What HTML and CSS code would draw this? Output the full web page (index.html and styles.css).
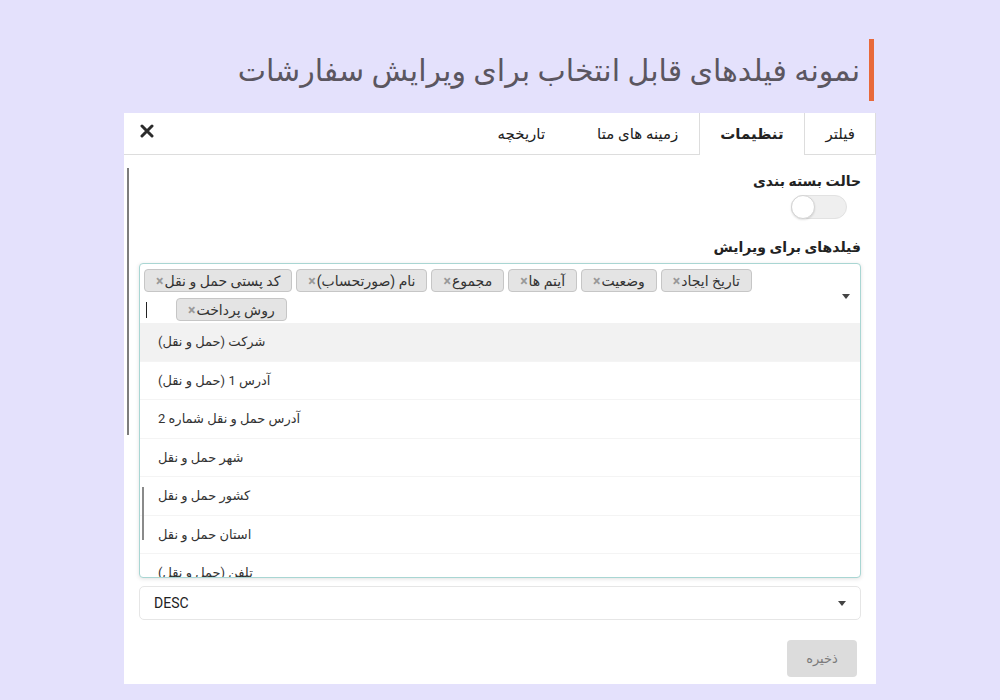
FILE: index.html
```html
<!DOCTYPE html>
<html lang="fa" dir="rtl">
<head>
  <meta charset="UTF-8" />
  <meta name="viewport" content="width=device-width, initial-scale=1.0" />
  <title>فیلدهای قابل ویرایش</title>
  <link rel="stylesheet" href="styles.css">
</head>
<body>
  <div class="page">
    <h1 class="page-title">نمونه فیلدهای قابل انتخاب برای ویرایش سفارشات</h1>

    <div class="card">
      <div class="tabs">
        <ul class="tab-list">
          <li class="tab">فیلتر</li>
          <li class="tab active">تنظیمات</li>
          <li class="tab">زمینه های متا</li>
          <li class="tab">تاریخچه</li>
        </ul>
        <button class="close" type="button" aria-label="بستن">
          <svg width="14" height="14" viewBox="0 0 14 14">
            <path d="M2 2 L12 12 M12 2 L2 12" stroke="#2b2b2b" stroke-width="3" stroke-linecap="round" />
          </svg>
        </button>
      </div>

      <div class="panel">
        <span class="scroll-mark mark-1"></span>
        <span class="scroll-mark mark-2"></span>

        <div class="field">
          <div class="toggle-field">
            <label>حالت بسته بندی</label>
            <span class="switch"><span class="knob"></span></span>
          </div>
        </div>

        <div class="field">
          <label class="field-label">فیلدهای برای ویرایش</label>
          <div class="multi-select">
            <div class="tags">
              <div class="tag-row">
                <span class="tag">کد پستی حمل و نقل<b>×</b></span>
                <span class="tag">نام (صورتحساب)<b>×</b></span>
                <span class="tag">مجموع<b>×</b></span>
                <span class="tag">آیتم ها<b>×</b></span>
                <span class="tag">وضعیت<b>×</b></span>
                <span class="tag">تاریخ ایجاد<b>×</b></span>
              </div>
              <div class="tag-row">
                <span class="cursor"></span>
                <span class="tag">روش پرداخت<b>×</b></span>
              </div>
            </div>
            <span class="caret multi-caret"></span>
            <ul class="options">
              <li class="option hover">شرکت (حمل و نقل)</li>
              <li class="option">آدرس 1 (حمل و نقل)</li>
              <li class="option">آدرس حمل و نقل شماره 2</li>
              <li class="option">شهر حمل و نقل</li>
              <li class="option">کشور حمل و نقل</li>
              <li class="option">استان حمل و نقل</li>
              <li class="option">تلفن (حمل و نقل)</li>
            </ul>
          </div>
        </div>

        <div class="select">
          <span class="select-value">DESC</span>
          <span class="caret"></span>
        </div>

        <div class="actions">
          <button class="save" type="button">ذخیره</button>
        </div>
      </div>
    </div>
  </div>
</body>
</html>
```

FILE: styles.css
```css
:root {
  --bg: #e4e1fc;
  --accent: #e8693a;
  --border: #dddddd;
  --text: #333333;
  --focus: #a9d6d3;
}
* {
  box-sizing: border-box;
}
body {
  margin: 0;
  background-color: var(--bg);
  font-family: Roboto, "DejaVu Sans", sans-serif;
  color: var(--text);
  direction: rtl;
}
.page {
  width: 752px;
  margin: 0 auto;
  padding-top: 39px;
}
.page-title {
  display: flex;
  align-items: center;
  height: 62px;
  margin: 0 2px 0 0;
  padding-right: 9px;
  border-right: 5px solid var(--accent);
  font-size: 30px;
  font-weight: normal;
  color: #5b5660;
  letter-spacing: 0.3px;
}
.card {
  margin-top: 12px;
  background: #ffffff;
}

/* tabs */
.tabs {
  display: flex;
  align-items: stretch;
  height: 42px;
  border-bottom: 1px solid var(--border);
}
.tab-list {
  display: flex;
  margin: 0;
  padding: 0;
  list-style: none;
}
.tab {
  display: flex;
  align-items: center;
  padding: 0 20px;
  font-size: 15px;
  color: #222;
  border-left: 1px solid transparent;
  border-right: 1px solid transparent;
}
.tab:first-child {
  border-right-color: var(--border);
}
.tab:last-child {
  padding-right: 30px;
}
.tab.active {
  font-weight: bold;
  border-color: var(--border);
  background: #fff;
  margin-bottom: -1px;
}
.close {
  margin-right: auto;
  padding: 0 16px;
  border: 0;
  background: none;
  display: flex;
  align-items: center;
  margin-top: -6px;
}

/* panel */
.panel {
  position: relative;
  padding: 16px 15px 7px 15px;
}
.scroll-mark {
  position: absolute;
  width: 2px;
  background: #7d7d7d;
}
.mark-1 {
  left: 3px;
  top: 13px;
  height: 267px;
}
.mark-2 {
  left: 18px;
  top: 332px;
  height: 53px;
  background: #8a8a8a;
  z-index: 2;
}
.toggle-field {
  display: inline-flex;
  flex-direction: column;
  align-items: flex-start;
  gap: 4px;
}
.toggle-field label,
.field-label {
  font-size: 14px;
  font-weight: bold;
  line-height: 19px;
  color: #222;
}
.switch {
  display: block;
  width: 56px;
  height: 24px;
  margin-right: 14px;
  border: 1px solid #e2e2e2;
  border-radius: 12px;
  background: #efefef;
  position: relative;
}
.knob {
  position: absolute;
  left: -1px;
  top: -1px;
  width: 24px;
  height: 24px;
  border-radius: 50%;
  background: #fff;
  border: 1px solid #d4d4d4;
  box-shadow: 0 1px 2px rgba(0, 0, 0, 0.12);
}
.field-label {
  display: block;
  margin-top: 19px;
  margin-bottom: 6px;
}

/* multi select */
.multi-select {
  position: relative;
  border: 1px solid var(--focus);
  border-radius: 4px;
  box-shadow: 0 1px 4px rgba(0, 0, 0, 0.12);
  background: #fff;
}
.tags {
  display: flex;
  flex-direction: column;
  gap: 6px;
  padding: 5px 4px 2px;
  direction: ltr;
}
.tag-row {
  display: flex;
  align-items: center;
  gap: 4px;
}
.tag {
  direction: rtl;
  display: inline-flex;
  align-items: center;
  height: 23px;
  padding: 0 11px;
  border: 1px solid #c6c6c6;
  border-radius: 4px;
  background: #e4e4e4;
  font-size: 14px;
  color: #333;
  white-space: nowrap;
}
.tag b {
  color: #999;
  font-size: 14px;
  margin-right: 1px;
}
.cursor {
  width: 1px;
  height: 16px;
  background: #222;
  margin-left: 2px;
  margin-right: 25px;
}
.caret {
  width: 0;
  height: 0;
  border-left: 4px solid transparent;
  border-right: 4px solid transparent;
  border-top: 5px solid #444;
}
.multi-caret {
  position: absolute;
  left: 702px;
  top: 30px;
}
.options {
  margin: 0;
  padding: 0;
  list-style: none;
  height: 254px;
  overflow: hidden;
}
.option {
  display: flex;
  align-items: center;
  height: 38.5px;
  padding: 0 18px;
  font-size: 13px;
  color: #333;
  border-bottom: 1px solid #f4f4f4;
  justify-content: flex-end;
}
.option.hover {
  background: #f2f2f2;
}

/* single select */
.select {
  display: flex;
  align-items: center;
  justify-content: space-between;
  direction: ltr;
  height: 34px;
  margin-top: 8px;
  padding: 0 14px;
  border: 1px solid #e6e6e6;
  border-radius: 5px;
  font-size: 14px;
  color: #222;
}
.actions {
  display: flex;
  margin-top: 20px;
}
.save {
  width: 70px;
  height: 37px;
  margin-right: 4px;
  border: 0;
  border-radius: 4px;
  background: #dcdcdc;
  color: #7a7a7a;
  font-family: inherit;
  font-size: 13px;
}
```
